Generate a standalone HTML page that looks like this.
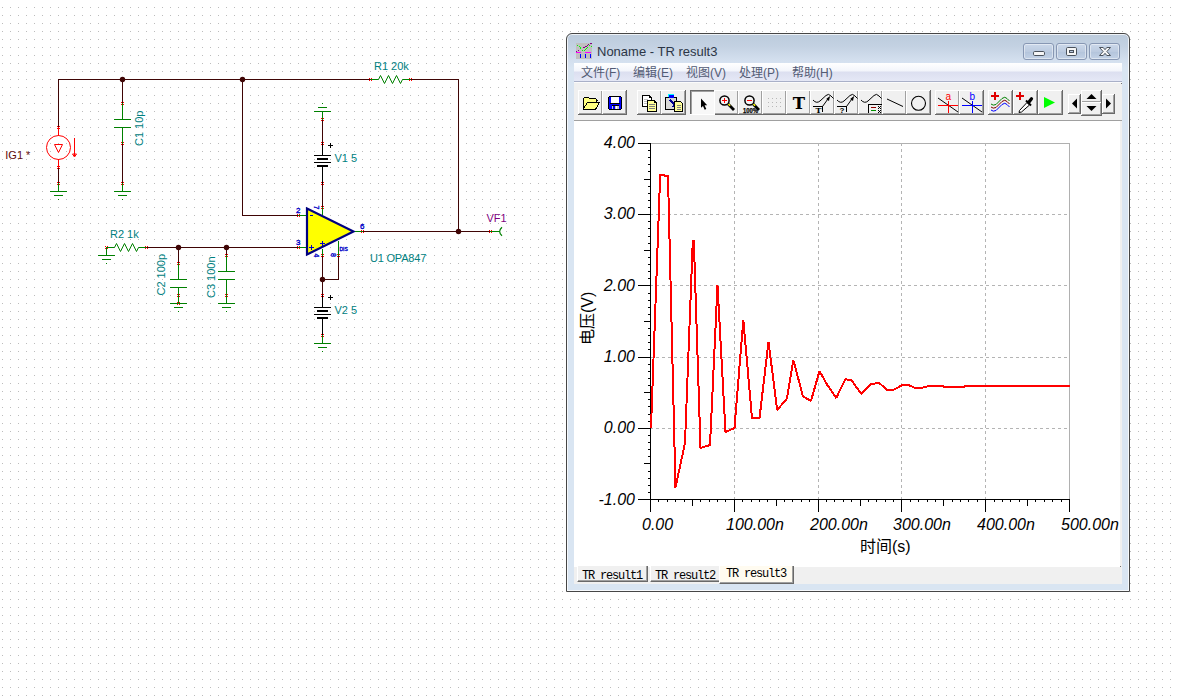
<!DOCTYPE html>
<html lang="zh">
<head>
<meta charset="utf-8">
<title>Noname - TR result3</title>
<style>
html,body{margin:0;padding:0;}
body{width:1178px;height:696px;position:relative;overflow:hidden;background:#fff;font-family:"Liberation Sans","Noto Sans CJK SC",sans-serif;}
svg{position:absolute;display:block;}
svg text{font-family:"Liberation Sans","Noto Sans CJK SC",sans-serif;}
#schem{left:0;top:0;}
#win{position:absolute;left:566px;top:33px;width:564px;height:559px;box-sizing:border-box;border:1px solid #464646;border-radius:6px 6px 0 0;
 background:linear-gradient(#bccbdc 0,#c3d1e2 12px,#d3dfee 26px,#d9e5f2 34px,#d9e5f2 100%);box-shadow:inset 0 0 0 1px rgba(255,255,255,.75);}
#ticon{left:576px;top:43px;}
#title{position:absolute;left:597px;top:43px;height:18px;line-height:18px;font-size:13px;color:#2c3646;white-space:nowrap;letter-spacing:0;}
.cb{position:absolute;top:43px;width:31px;height:17px;box-sizing:border-box;border:1px solid #8797b3;border-radius:3px;background:linear-gradient(#cbd8ea 0,#bccbe0 50%,#b3c4db 51%,#c3d2e6 100%);box-shadow:inset 0 0 0 1px rgba(255,255,255,.45);}
#menu{position:absolute;left:574px;top:63px;width:548px;height:19px;box-sizing:border-box;border-bottom:1px solid #a9b0c8;
 background:linear-gradient(#ffffff 0,#f3f5fb 8px,#dcdff0 9px,#e5e8f6 18px);}
#menu span{position:absolute;top:3px;font-size:12px;line-height:15px;color:#525b74;white-space:nowrap;}
#menu span i{font-style:normal;}
#tbar{position:absolute;left:574px;top:82px;width:548px;height:39px;box-sizing:border-box;background:#f0f0f0;border-top:1px solid #fbfbfb;border-bottom:1px solid #a0a0a0;}
#tb{left:574px;top:83px;}
#client{position:absolute;left:574px;top:83px;width:548px;height:501px;background:#f0f0f0;}
#plotbg{position:absolute;left:574px;top:121px;width:546px;height:446px;background:#fff;}
#plot{left:574px;top:121px;}
#tabs{position:absolute;left:574px;top:567px;width:548px;height:17px;background:#f0f0f0;}
.tab{position:absolute;top:566px;height:16px;box-sizing:border-box;background:#f0f0f0;border-left:1px solid #fff;border-right:1px solid #696969;border-bottom:1px solid #696969;box-shadow:inset -1px -1px 0 #a0a0a0;
 font-family:"Liberation Mono",monospace;font-size:12px;letter-spacing:-1.2px;line-height:21px;padding-left:4px;overflow:hidden;color:#000;white-space:nowrap;}
.tab.sel{height:18px;background:#fffbf0;line-height:17px;padding-left:6px;}
</style>
</head>
<body>
<svg id="schem" width="1178" height="696" viewBox="0 0 1178 696" shape-rendering="crispEdges">
<defs><pattern id="dots" x="0" y="0" width="8" height="8" patternUnits="userSpaceOnUse"><rect x="2" y="7" width="1" height="1" fill="#bcbcbc"/></pattern></defs>
<rect x="0" y="0" width="1178" height="696" fill="#ffffff"/>
<rect x="0" y="0" width="1178" height="696" fill="url(#dots)"/>
<rect x="58" y="79" width="313" height="1" fill="#3f0505"/>
<rect x="58" y="79" width="1" height="49" fill="#3f0505"/>
<rect x="122" y="79" width="1" height="25" fill="#3f0505"/>
<rect x="242" y="79" width="1" height="137" fill="#3f0505"/>
<rect x="242" y="215" width="57" height="1" fill="#3f0505"/>
<rect x="410" y="79" width="49" height="1" fill="#3f0505"/>
<rect x="458" y="79" width="1" height="153" fill="#3f0505"/>
<rect x="362" y="231" width="129" height="1" fill="#3f0505"/>
<rect x="146" y="247" width="153" height="1" fill="#3f0505"/>
<rect x="178" y="247" width="1" height="17" fill="#3f0505"/>
<rect x="226" y="247" width="1" height="9" fill="#3f0505"/>
<rect x="58" y="167" width="1" height="17" fill="#3f0505"/>
<rect x="122" y="143" width="1" height="41" fill="#3f0505"/>
<rect x="322" y="119" width="1" height="25" fill="#3f0505"/>
<rect x="322" y="183" width="1" height="25" fill="#3f0505"/>
<rect x="322" y="255" width="1" height="41" fill="#3f0505"/>
<rect x="338" y="255" width="1" height="25" fill="#3f0505"/>
<rect x="322" y="279" width="17" height="1" fill="#3f0505"/>
<rect x="58" y="127" width="1" height="9" fill="#ff0000"/>
<rect x="58" y="159" width="1" height="9" fill="#ff0000"/>
<circle cx="58.5" cy="147.5" r="12" fill="none" stroke="#ff0000" stroke-width="1" shape-rendering="auto"/>
<polygon points="54.5,144.5 62.5,144.5 58.5,152.5" fill="none" stroke="#ff0000" stroke-width="1" shape-rendering="auto"/>
<rect x="74" y="138" width="1" height="18" fill="#ff0000"/>
<polygon points="72.5,154 76.5,154 74.5,157" fill="none" stroke="#ff0000" stroke-width="1" shape-rendering="auto"/>
<rect x="57" y="126" width="1" height="1" fill="#ff0000"/>
<rect x="57" y="128" width="1" height="1" fill="#ff0000"/>
<rect x="59" y="126" width="1" height="1" fill="#ff0000"/>
<rect x="59" y="128" width="1" height="1" fill="#ff0000"/>
<rect x="57" y="166" width="1" height="1" fill="#ff0000"/>
<rect x="57" y="168" width="1" height="1" fill="#ff0000"/>
<rect x="59" y="166" width="1" height="1" fill="#ff0000"/>
<rect x="59" y="168" width="1" height="1" fill="#ff0000"/>
<rect x="58" y="183" width="1" height="9" fill="#008000"/>
<rect x="50" y="191" width="17" height="1" fill="#008000"/>
<rect x="54" y="195" width="9" height="1" fill="#008000"/>
<rect x="58" y="199" width="1" height="1" fill="#008000"/>
<rect x="57" y="182" width="1" height="1" fill="#ff0000"/>
<rect x="57" y="184" width="1" height="1" fill="#ff0000"/>
<rect x="59" y="182" width="1" height="1" fill="#ff0000"/>
<rect x="59" y="184" width="1" height="1" fill="#ff0000"/>
<rect x="122" y="183" width="1" height="9" fill="#008000"/>
<rect x="114" y="191" width="17" height="1" fill="#008000"/>
<rect x="118" y="195" width="9" height="1" fill="#008000"/>
<rect x="122" y="199" width="1" height="1" fill="#008000"/>
<rect x="121" y="182" width="1" height="1" fill="#ff0000"/>
<rect x="121" y="184" width="1" height="1" fill="#ff0000"/>
<rect x="123" y="182" width="1" height="1" fill="#ff0000"/>
<rect x="123" y="184" width="1" height="1" fill="#ff0000"/>
<rect x="122" y="103" width="1" height="17" fill="#008000"/>
<rect x="114" y="119" width="17" height="1" fill="#008000"/>
<rect x="114" y="127" width="17" height="1" fill="#008000"/>
<rect x="122" y="127" width="1" height="17" fill="#008000"/>
<rect x="121" y="102" width="1" height="1" fill="#ff0000"/>
<rect x="121" y="104" width="1" height="1" fill="#ff0000"/>
<rect x="123" y="102" width="1" height="1" fill="#ff0000"/>
<rect x="123" y="104" width="1" height="1" fill="#ff0000"/>
<rect x="121" y="142" width="1" height="1" fill="#ff0000"/>
<rect x="121" y="144" width="1" height="1" fill="#ff0000"/>
<rect x="123" y="142" width="1" height="1" fill="#ff0000"/>
<rect x="123" y="144" width="1" height="1" fill="#ff0000"/>
<polyline points="370.5,79.5 378.5,79.5 380.5,75.5 384.5,83.5 388.5,75.5 392.5,83.5 396.5,75.5 400.5,83.5 402.5,79.5 410.5,79.5" fill="none" stroke="#008000" stroke-width="1" shape-rendering="auto"/>
<rect x="369" y="78" width="1" height="1" fill="#ff0000"/>
<rect x="369" y="80" width="1" height="1" fill="#ff0000"/>
<rect x="371" y="78" width="1" height="1" fill="#ff0000"/>
<rect x="371" y="80" width="1" height="1" fill="#ff0000"/>
<rect x="409" y="78" width="1" height="1" fill="#ff0000"/>
<rect x="409" y="80" width="1" height="1" fill="#ff0000"/>
<rect x="411" y="78" width="1" height="1" fill="#ff0000"/>
<rect x="411" y="80" width="1" height="1" fill="#ff0000"/>
<rect x="322" y="111" width="1" height="9" fill="#008000"/>
<rect x="314" y="111" width="17" height="1" fill="#008000"/>
<rect x="318" y="107" width="9" height="1" fill="#008000"/>
<rect x="322" y="103" width="1" height="1" fill="#008000"/>
<rect x="321" y="118" width="1" height="1" fill="#ff0000"/>
<rect x="321" y="120" width="1" height="1" fill="#ff0000"/>
<rect x="323" y="118" width="1" height="1" fill="#ff0000"/>
<rect x="323" y="120" width="1" height="1" fill="#ff0000"/>
<rect x="322" y="143" width="1" height="13" fill="#000000"/>
<rect x="314" y="155" width="17" height="1" fill="#000000"/>
<rect x="317" y="158" width="11" height="2" fill="#000000"/>
<rect x="314" y="162" width="17" height="1" fill="#000000"/>
<rect x="317" y="165" width="11" height="2" fill="#000000"/>
<rect x="322" y="166" width="1" height="18" fill="#000000"/>
<rect x="321" y="142" width="1" height="1" fill="#ff0000"/>
<rect x="321" y="144" width="1" height="1" fill="#ff0000"/>
<rect x="323" y="142" width="1" height="1" fill="#ff0000"/>
<rect x="323" y="144" width="1" height="1" fill="#ff0000"/>
<rect x="321" y="182" width="1" height="1" fill="#ff0000"/>
<rect x="321" y="184" width="1" height="1" fill="#ff0000"/>
<rect x="323" y="182" width="1" height="1" fill="#ff0000"/>
<rect x="323" y="184" width="1" height="1" fill="#ff0000"/>
<rect x="328" y="145" width="5" height="1" fill="#000000"/>
<rect x="330" y="143" width="1" height="5" fill="#000000"/>
<polygon points="307,208.5 307,254.5 353.5,231.5" fill="#ffff00" stroke="#000080" stroke-width="2.2" stroke-linejoin="miter" shape-rendering="auto"/>
<rect x="298" y="215" width="8" height="1" fill="#008000"/>
<rect x="298" y="247" width="8" height="1" fill="#008000"/>
<rect x="355" y="231" width="8" height="1" fill="#008000"/>
<rect x="322" y="207" width="1" height="8" fill="#008000"/>
<rect x="322" y="249" width="1" height="7" fill="#008000"/>
<rect x="338" y="241" width="1" height="15" fill="#008000"/>
<rect x="297" y="214" width="1" height="1" fill="#ff0000"/>
<rect x="297" y="216" width="1" height="1" fill="#ff0000"/>
<rect x="299" y="214" width="1" height="1" fill="#ff0000"/>
<rect x="299" y="216" width="1" height="1" fill="#ff0000"/>
<rect x="297" y="246" width="1" height="1" fill="#ff0000"/>
<rect x="297" y="248" width="1" height="1" fill="#ff0000"/>
<rect x="299" y="246" width="1" height="1" fill="#ff0000"/>
<rect x="299" y="248" width="1" height="1" fill="#ff0000"/>
<rect x="361" y="230" width="1" height="1" fill="#ff0000"/>
<rect x="361" y="232" width="1" height="1" fill="#ff0000"/>
<rect x="363" y="230" width="1" height="1" fill="#ff0000"/>
<rect x="363" y="232" width="1" height="1" fill="#ff0000"/>
<rect x="321" y="206" width="1" height="1" fill="#ff0000"/>
<rect x="321" y="208" width="1" height="1" fill="#ff0000"/>
<rect x="323" y="206" width="1" height="1" fill="#ff0000"/>
<rect x="323" y="208" width="1" height="1" fill="#ff0000"/>
<rect x="321" y="254" width="1" height="1" fill="#ff0000"/>
<rect x="321" y="256" width="1" height="1" fill="#ff0000"/>
<rect x="323" y="254" width="1" height="1" fill="#ff0000"/>
<rect x="323" y="256" width="1" height="1" fill="#ff0000"/>
<rect x="337" y="254" width="1" height="1" fill="#ff0000"/>
<rect x="337" y="256" width="1" height="1" fill="#ff0000"/>
<rect x="339" y="254" width="1" height="1" fill="#ff0000"/>
<rect x="339" y="256" width="1" height="1" fill="#ff0000"/>
<text x="296" y="212.7" fill="#0000c8" font-size="8" stroke="#0000c8" stroke-width="0.35">2</text>
<text x="296" y="244.6" fill="#0000c8" font-size="8" stroke="#0000c8" stroke-width="0.35">3</text>
<text x="360" y="228.6" fill="#0000c8" font-size="8" stroke="#0000c8" stroke-width="0.35">6</text>
<text transform="translate(314,205.5) rotate(90)" fill="#0000c8" font-size="7" stroke="#0000c8" stroke-width="0.35">7</text>
<text transform="translate(314,253.5) rotate(90)" fill="#0000c8" font-size="7" stroke="#0000c8" stroke-width="0.35">4</text>
<text transform="translate(330.5,253) rotate(90)" fill="#0000c8" font-size="7" stroke="#0000c8" stroke-width="0.35">8</text>
<text x="339.5" y="251.2" fill="#0000c8" font-size="5" stroke="#0000c8" stroke-width="0.35">DIS</text>
<rect x="310" y="215" width="3" height="1" fill="#0000c8"/>
<rect x="309" y="247" width="5" height="1" fill="#0000c8"/>
<rect x="311" y="245" width="1" height="5" fill="#0000c8"/>
<rect x="320" y="243" width="5" height="1" fill="#0000c8"/>
<rect x="322" y="241" width="1" height="5" fill="#0000c8"/>
<rect x="322" y="295" width="1" height="13" fill="#000000"/>
<rect x="314" y="307" width="17" height="1" fill="#000000"/>
<rect x="317" y="310" width="11" height="2" fill="#000000"/>
<rect x="314" y="314" width="17" height="1" fill="#000000"/>
<rect x="317" y="317" width="11" height="2" fill="#000000"/>
<rect x="322" y="318" width="1" height="18" fill="#000000"/>
<rect x="321" y="294" width="1" height="1" fill="#ff0000"/>
<rect x="321" y="296" width="1" height="1" fill="#ff0000"/>
<rect x="323" y="294" width="1" height="1" fill="#ff0000"/>
<rect x="323" y="296" width="1" height="1" fill="#ff0000"/>
<rect x="321" y="334" width="1" height="1" fill="#ff0000"/>
<rect x="321" y="336" width="1" height="1" fill="#ff0000"/>
<rect x="323" y="334" width="1" height="1" fill="#ff0000"/>
<rect x="323" y="336" width="1" height="1" fill="#ff0000"/>
<rect x="328" y="297" width="5" height="1" fill="#000000"/>
<rect x="330" y="295" width="1" height="5" fill="#000000"/>
<rect x="322" y="335" width="1" height="9" fill="#008000"/>
<rect x="314" y="343" width="17" height="1" fill="#008000"/>
<rect x="318" y="347" width="9" height="1" fill="#008000"/>
<rect x="322" y="351" width="1" height="1" fill="#008000"/>
<rect x="321" y="334" width="1" height="1" fill="#ff0000"/>
<rect x="321" y="336" width="1" height="1" fill="#ff0000"/>
<rect x="323" y="334" width="1" height="1" fill="#ff0000"/>
<rect x="323" y="336" width="1" height="1" fill="#ff0000"/>
<polyline points="106.5,247.5 114.5,247.5 116.5,243.5 120.5,251.5 124.5,243.5 128.5,251.5 132.5,243.5 136.5,251.5 138.5,247.5 146.5,247.5" fill="none" stroke="#008000" stroke-width="1" shape-rendering="auto"/>
<rect x="105" y="246" width="1" height="1" fill="#ff0000"/>
<rect x="105" y="248" width="1" height="1" fill="#ff0000"/>
<rect x="107" y="246" width="1" height="1" fill="#ff0000"/>
<rect x="107" y="248" width="1" height="1" fill="#ff0000"/>
<rect x="145" y="246" width="1" height="1" fill="#ff0000"/>
<rect x="145" y="248" width="1" height="1" fill="#ff0000"/>
<rect x="147" y="246" width="1" height="1" fill="#ff0000"/>
<rect x="147" y="248" width="1" height="1" fill="#ff0000"/>
<rect x="106" y="247" width="1" height="9" fill="#008000"/>
<rect x="98" y="255" width="17" height="1" fill="#008000"/>
<rect x="102" y="259" width="9" height="1" fill="#008000"/>
<rect x="106" y="263" width="1" height="1" fill="#008000"/>
<rect x="178" y="263" width="1" height="17" fill="#008000"/>
<rect x="170" y="279" width="17" height="1" fill="#008000"/>
<rect x="170" y="287" width="17" height="1" fill="#008000"/>
<rect x="178" y="287" width="1" height="17" fill="#008000"/>
<rect x="177" y="262" width="1" height="1" fill="#ff0000"/>
<rect x="177" y="264" width="1" height="1" fill="#ff0000"/>
<rect x="179" y="262" width="1" height="1" fill="#ff0000"/>
<rect x="179" y="264" width="1" height="1" fill="#ff0000"/>
<rect x="177" y="302" width="1" height="1" fill="#ff0000"/>
<rect x="177" y="304" width="1" height="1" fill="#ff0000"/>
<rect x="179" y="302" width="1" height="1" fill="#ff0000"/>
<rect x="179" y="304" width="1" height="1" fill="#ff0000"/>
<rect x="177" y="294" width="1" height="1" fill="#ff0000"/>
<rect x="177" y="296" width="1" height="1" fill="#ff0000"/>
<rect x="179" y="294" width="1" height="1" fill="#ff0000"/>
<rect x="179" y="296" width="1" height="1" fill="#ff0000"/>
<rect x="170" y="303" width="17" height="1" fill="#008000"/>
<rect x="174" y="307" width="9" height="1" fill="#008000"/>
<rect x="178" y="311" width="1" height="1" fill="#008000"/>
<rect x="226" y="255" width="1" height="17" fill="#008000"/>
<rect x="218" y="271" width="17" height="1" fill="#008000"/>
<rect x="218" y="279" width="17" height="1" fill="#008000"/>
<rect x="226" y="279" width="1" height="17" fill="#008000"/>
<rect x="225" y="254" width="1" height="1" fill="#ff0000"/>
<rect x="225" y="256" width="1" height="1" fill="#ff0000"/>
<rect x="227" y="254" width="1" height="1" fill="#ff0000"/>
<rect x="227" y="256" width="1" height="1" fill="#ff0000"/>
<rect x="225" y="294" width="1" height="1" fill="#ff0000"/>
<rect x="225" y="296" width="1" height="1" fill="#ff0000"/>
<rect x="227" y="294" width="1" height="1" fill="#ff0000"/>
<rect x="227" y="296" width="1" height="1" fill="#ff0000"/>
<rect x="226" y="295" width="1" height="9" fill="#008000"/>
<rect x="218" y="303" width="17" height="1" fill="#008000"/>
<rect x="222" y="307" width="9" height="1" fill="#008000"/>
<rect x="226" y="311" width="1" height="1" fill="#008000"/>
<rect x="490" y="231" width="10" height="1" fill="#008000"/>
<rect x="489" y="230" width="1" height="1" fill="#ff0000"/>
<rect x="489" y="232" width="1" height="1" fill="#ff0000"/>
<rect x="491" y="230" width="1" height="1" fill="#ff0000"/>
<rect x="491" y="232" width="1" height="1" fill="#ff0000"/>
<path d="M502,227.3 Q497.3,231.5 502,235.8" fill="none" stroke="#008000" stroke-width="1.2" shape-rendering="auto"/>
<circle cx="122.5" cy="79.5" r="2.7" fill="#3f0505" shape-rendering="auto"/>
<circle cx="242.5" cy="79.5" r="2.7" fill="#3f0505" shape-rendering="auto"/>
<circle cx="458.5" cy="231.5" r="2.7" fill="#3f0505" shape-rendering="auto"/>
<circle cx="178.5" cy="247.5" r="2.7" fill="#3f0505" shape-rendering="auto"/>
<circle cx="226.5" cy="247.5" r="2.7" fill="#3f0505" shape-rendering="auto"/>
<circle cx="322.5" cy="279.5" r="2.7" fill="#3f0505" shape-rendering="auto"/>
<text x="374" y="70" fill="#008080" font-size="11">R1 20k</text>
<text x="5.3" y="159" fill="#600a0a" font-size="11">IG1 *</text>
<text transform="translate(143,146) rotate(-90)" fill="#008080" font-size="11">C1 10p</text>
<text x="334.5" y="162" fill="#008080" font-size="11">V1 5</text>
<text x="334.5" y="314" fill="#008080" font-size="11">V2 5</text>
<text x="370" y="262" fill="#008080" font-size="11" letter-spacing="-0.2">U1 OPA847</text>
<text x="486.5" y="222" fill="#800080" font-size="11">VF1</text>
<text x="110" y="238" fill="#008080" font-size="11">R2 1k</text>
<text transform="translate(165.3,295.5) rotate(-90)" fill="#008080" font-size="11">C2 100p</text>
<text transform="translate(214.5,298) rotate(-90)" fill="#008080" font-size="11">C3 100n</text>
</svg>
<div id="win"></div>
<svg id="ticon" width="16" height="16" viewBox="0 0 16 16" shape-rendering="crispEdges">
<rect x="0" y="0" width="16" height="16" fill="#c0c0c0"/>
<rect x="14" y="0" width="2" height="1" fill="#800080"/>
<rect x="12" y="1" width="1" height="1" fill="#800080"/>
<rect x="11" y="2" width="1" height="1" fill="#800080"/>
<rect x="9" y="3" width="2" height="1" fill="#800080"/>
<rect x="7" y="4" width="2" height="1" fill="#800080"/>
<rect x="2" y="7" width="1" height="1" fill="#800080"/>
<rect x="0" y="8" width="1" height="1" fill="#800080"/>
<rect x="1" y="2" width="1" height="1" fill="#00ff00"/>
<rect x="3" y="3" width="1" height="1" fill="#00ff00"/>
<rect x="4" y="4" width="1" height="1" fill="#00ff00"/>
<rect x="4" y="5" width="1" height="1" fill="#00ff00"/>
<rect x="6" y="7" width="1" height="1" fill="#00ff00"/>
<rect x="8" y="7" width="1" height="1" fill="#00ff00"/>
<rect x="9" y="6" width="1" height="1" fill="#00ff00"/>
<rect x="10" y="5" width="1" height="1" fill="#00ff00"/>
<rect x="11" y="4" width="1" height="1" fill="#00ff00"/>
<rect x="13" y="2" width="1" height="1" fill="#00ff00"/>
<rect x="15" y="3" width="1" height="1" fill="#00ff00"/>
<rect x="0" y="9" width="5" height="1" fill="#ff00ff"/>
<rect x="9" y="9" width="6" height="1" fill="#ff00ff"/>
<rect x="4" y="11" width="1" height="4" fill="#0000ff"/>
<rect x="9" y="11" width="1" height="4" fill="#0000ff"/>
<rect x="14" y="11" width="1" height="4" fill="#0000ff"/>
</svg>
<div id="title">Noname - TR result3</div>
<div class="cb" style="left:1023px"></div><div class="cb" style="left:1056px"></div><div class="cb" style="left:1089px"></div>
<svg id="cbg" style="left:1023px;top:43px" width="97" height="17" viewBox="0 0 97 17">
<rect x="10.500" y="8.500" width="11" height="4" rx="1.200" fill="#f6f6f6" stroke="#4a525c" stroke-width="1"/>
<rect x="43.500" y="4.500" width="10" height="8" rx="1.200" fill="#f6f6f6" stroke="#4a525c" stroke-width="1"/><rect x="46.500" y="7.500" width="4" height="2" fill="#b9c8dd" stroke="#4a525c" stroke-width="1"/>
<path d="M76.500,4.500 h3.700 l1.800,2.200 l1.800,-2.200 h3.700 l-3.600,4 l3.600,4 h-3.700 l-1.800,-2.200 l-1.800,2.200 h-3.700 l3.600,-4 z" fill="#f6f6f6" stroke="#4a525c" stroke-width="1"/>
</svg>
<div id="menu"><span style="left:7px">文件<i>(F)</i></span><span style="left:59px">编辑<i>(E)</i></span><span style="left:112px">视图<i>(V)</i></span><span style="left:165px">处理<i>(P)</i></span><span style="left:218px">帮助<i>(H)</i></span></div>
<div id="client"></div>
<div id="tbar"></div>
<svg id="tb" width="548" height="38" viewBox="574 83 548 38" shape-rendering="crispEdges">
<rect x="578" y="90" width="25" height="25" fill="#f0f0f0"/>
<rect x="578" y="90" width="25" height="1" fill="#ffffff"/>
<rect x="578" y="90" width="1" height="25" fill="#ffffff"/>
<rect x="601" y="91" width="1" height="23" fill="#a0a0a0"/>
<rect x="579" y="113" width="23" height="1" fill="#a0a0a0"/>
<rect x="602" y="90" width="1" height="25" fill="#696969"/>
<rect x="578" y="114" width="25" height="1" fill="#696969"/>
<rect x="602" y="90" width="25" height="25" fill="#f0f0f0"/>
<rect x="602" y="90" width="25" height="1" fill="#ffffff"/>
<rect x="602" y="90" width="1" height="25" fill="#ffffff"/>
<rect x="625" y="91" width="1" height="23" fill="#a0a0a0"/>
<rect x="603" y="113" width="23" height="1" fill="#a0a0a0"/>
<rect x="626" y="90" width="1" height="25" fill="#696969"/>
<rect x="602" y="114" width="25" height="1" fill="#696969"/>
<rect x="637" y="90" width="25" height="25" fill="#f0f0f0"/>
<rect x="637" y="90" width="25" height="1" fill="#ffffff"/>
<rect x="637" y="90" width="1" height="25" fill="#ffffff"/>
<rect x="660" y="91" width="1" height="23" fill="#a0a0a0"/>
<rect x="638" y="113" width="23" height="1" fill="#a0a0a0"/>
<rect x="661" y="90" width="1" height="25" fill="#696969"/>
<rect x="637" y="114" width="25" height="1" fill="#696969"/>
<rect x="661" y="90" width="25" height="25" fill="#f0f0f0"/>
<rect x="661" y="90" width="25" height="1" fill="#ffffff"/>
<rect x="661" y="90" width="1" height="25" fill="#ffffff"/>
<rect x="684" y="91" width="1" height="23" fill="#a0a0a0"/>
<rect x="662" y="113" width="23" height="1" fill="#a0a0a0"/>
<rect x="685" y="90" width="1" height="25" fill="#696969"/>
<rect x="661" y="114" width="25" height="1" fill="#696969"/>
<rect x="714" y="90" width="25" height="25" fill="#f0f0f0"/>
<rect x="714" y="90" width="25" height="1" fill="#ffffff"/>
<rect x="714" y="90" width="1" height="25" fill="#ffffff"/>
<rect x="737" y="91" width="1" height="23" fill="#a0a0a0"/>
<rect x="715" y="113" width="23" height="1" fill="#a0a0a0"/>
<rect x="738" y="90" width="1" height="25" fill="#696969"/>
<rect x="714" y="114" width="25" height="1" fill="#696969"/>
<rect x="738" y="90" width="25" height="25" fill="#f0f0f0"/>
<rect x="738" y="90" width="25" height="1" fill="#ffffff"/>
<rect x="738" y="90" width="1" height="25" fill="#ffffff"/>
<rect x="761" y="91" width="1" height="23" fill="#a0a0a0"/>
<rect x="739" y="113" width="23" height="1" fill="#a0a0a0"/>
<rect x="762" y="90" width="1" height="25" fill="#696969"/>
<rect x="738" y="114" width="25" height="1" fill="#696969"/>
<rect x="762" y="90" width="25" height="25" fill="#f0f0f0"/>
<rect x="762" y="90" width="25" height="1" fill="#ffffff"/>
<rect x="762" y="90" width="1" height="25" fill="#ffffff"/>
<rect x="785" y="91" width="1" height="23" fill="#a0a0a0"/>
<rect x="763" y="113" width="23" height="1" fill="#a0a0a0"/>
<rect x="786" y="90" width="1" height="25" fill="#696969"/>
<rect x="762" y="114" width="25" height="1" fill="#696969"/>
<rect x="786" y="90" width="25" height="25" fill="#f0f0f0"/>
<rect x="786" y="90" width="25" height="1" fill="#ffffff"/>
<rect x="786" y="90" width="1" height="25" fill="#ffffff"/>
<rect x="809" y="91" width="1" height="23" fill="#a0a0a0"/>
<rect x="787" y="113" width="23" height="1" fill="#a0a0a0"/>
<rect x="810" y="90" width="1" height="25" fill="#696969"/>
<rect x="786" y="114" width="25" height="1" fill="#696969"/>
<rect x="810" y="90" width="25" height="25" fill="#f0f0f0"/>
<rect x="810" y="90" width="25" height="1" fill="#ffffff"/>
<rect x="810" y="90" width="1" height="25" fill="#ffffff"/>
<rect x="833" y="91" width="1" height="23" fill="#a0a0a0"/>
<rect x="811" y="113" width="23" height="1" fill="#a0a0a0"/>
<rect x="834" y="90" width="1" height="25" fill="#696969"/>
<rect x="810" y="114" width="25" height="1" fill="#696969"/>
<rect x="834" y="90" width="25" height="25" fill="#f0f0f0"/>
<rect x="834" y="90" width="25" height="1" fill="#ffffff"/>
<rect x="834" y="90" width="1" height="25" fill="#ffffff"/>
<rect x="857" y="91" width="1" height="23" fill="#a0a0a0"/>
<rect x="835" y="113" width="23" height="1" fill="#a0a0a0"/>
<rect x="858" y="90" width="1" height="25" fill="#696969"/>
<rect x="834" y="114" width="25" height="1" fill="#696969"/>
<rect x="858" y="90" width="25" height="25" fill="#f0f0f0"/>
<rect x="858" y="90" width="25" height="1" fill="#ffffff"/>
<rect x="858" y="90" width="1" height="25" fill="#ffffff"/>
<rect x="881" y="91" width="1" height="23" fill="#a0a0a0"/>
<rect x="859" y="113" width="23" height="1" fill="#a0a0a0"/>
<rect x="882" y="90" width="1" height="25" fill="#696969"/>
<rect x="858" y="114" width="25" height="1" fill="#696969"/>
<rect x="882" y="90" width="25" height="25" fill="#f0f0f0"/>
<rect x="882" y="90" width="25" height="1" fill="#ffffff"/>
<rect x="882" y="90" width="1" height="25" fill="#ffffff"/>
<rect x="905" y="91" width="1" height="23" fill="#a0a0a0"/>
<rect x="883" y="113" width="23" height="1" fill="#a0a0a0"/>
<rect x="906" y="90" width="1" height="25" fill="#696969"/>
<rect x="882" y="114" width="25" height="1" fill="#696969"/>
<rect x="906" y="90" width="25" height="25" fill="#f0f0f0"/>
<rect x="906" y="90" width="25" height="1" fill="#ffffff"/>
<rect x="906" y="90" width="1" height="25" fill="#ffffff"/>
<rect x="929" y="91" width="1" height="23" fill="#a0a0a0"/>
<rect x="907" y="113" width="23" height="1" fill="#a0a0a0"/>
<rect x="930" y="90" width="1" height="25" fill="#696969"/>
<rect x="906" y="114" width="25" height="1" fill="#696969"/>
<rect x="935" y="90" width="25" height="25" fill="#f0f0f0"/>
<rect x="935" y="90" width="25" height="1" fill="#ffffff"/>
<rect x="935" y="90" width="1" height="25" fill="#ffffff"/>
<rect x="958" y="91" width="1" height="23" fill="#a0a0a0"/>
<rect x="936" y="113" width="23" height="1" fill="#a0a0a0"/>
<rect x="959" y="90" width="1" height="25" fill="#696969"/>
<rect x="935" y="114" width="25" height="1" fill="#696969"/>
<rect x="959" y="90" width="25" height="25" fill="#f0f0f0"/>
<rect x="959" y="90" width="25" height="1" fill="#ffffff"/>
<rect x="959" y="90" width="1" height="25" fill="#ffffff"/>
<rect x="982" y="91" width="1" height="23" fill="#a0a0a0"/>
<rect x="960" y="113" width="23" height="1" fill="#a0a0a0"/>
<rect x="983" y="90" width="1" height="25" fill="#696969"/>
<rect x="959" y="114" width="25" height="1" fill="#696969"/>
<rect x="988" y="90" width="25" height="25" fill="#f0f0f0"/>
<rect x="988" y="90" width="25" height="1" fill="#ffffff"/>
<rect x="988" y="90" width="1" height="25" fill="#ffffff"/>
<rect x="1011" y="91" width="1" height="23" fill="#a0a0a0"/>
<rect x="989" y="113" width="23" height="1" fill="#a0a0a0"/>
<rect x="1012" y="90" width="1" height="25" fill="#696969"/>
<rect x="988" y="114" width="25" height="1" fill="#696969"/>
<rect x="1013" y="90" width="25" height="25" fill="#f0f0f0"/>
<rect x="1013" y="90" width="25" height="1" fill="#ffffff"/>
<rect x="1013" y="90" width="1" height="25" fill="#ffffff"/>
<rect x="1036" y="91" width="1" height="23" fill="#a0a0a0"/>
<rect x="1014" y="113" width="23" height="1" fill="#a0a0a0"/>
<rect x="1037" y="90" width="1" height="25" fill="#696969"/>
<rect x="1013" y="114" width="25" height="1" fill="#696969"/>
<rect x="1038" y="90" width="25" height="25" fill="#f0f0f0"/>
<rect x="1038" y="90" width="25" height="1" fill="#ffffff"/>
<rect x="1038" y="90" width="1" height="25" fill="#ffffff"/>
<rect x="1061" y="91" width="1" height="23" fill="#a0a0a0"/>
<rect x="1039" y="113" width="23" height="1" fill="#a0a0a0"/>
<rect x="1062" y="90" width="1" height="25" fill="#696969"/>
<rect x="1038" y="114" width="25" height="1" fill="#696969"/>
<rect x="690" y="90" width="25" height="25" fill="#f8f8f8"/>
<rect x="690" y="90" width="25" height="1" fill="#696969"/>
<rect x="690" y="90" width="1" height="25" fill="#696969"/>
<rect x="691" y="91" width="23" height="1" fill="#a0a0a0"/>
<rect x="691" y="91" width="1" height="23" fill="#a0a0a0"/>
<rect x="714" y="90" width="1" height="25" fill="#ffffff"/>
<rect x="690" y="114" width="25" height="1" fill="#ffffff"/>
<rect x="714" y="90" width="1" height="25" fill="#ffffff"/>
<path d="M583.5,108.5 V98.5 L584.5,97.5 H588.5 L589.5,98.5 H595.5 L596.5,99.5 V102.5 H587.5 L583.5,108.5 Z" fill="#ffff80" stroke="#000" stroke-width="1" />
<path d="M587.5,102.5 H599.5 L595.5,109.5 H584 L583.5,108.5 Z" fill="#ffff80" stroke="#000" stroke-width="1" />
<rect x="596" y="100" width="2" height="1" fill="#000"/>
<path d="M609.5,96.5 H620.5 L621.5,97.5 V108.5 L620.5,109.5 H609.5 L608.5,108.5 V97.5 Z" fill="#0000ff" stroke="#000" stroke-width="1" />
<rect x="611" y="97" width="8" height="6" fill="#ffffff"/>
<rect x="610" y="103" width="10" height="1" fill="#000"/>
<rect x="612" y="105" width="7" height="1" fill="#000"/>
<rect x="612" y="106" width="7" height="3" fill="#c8c8c8"/>
<rect x="613" y="106" width="2" height="3" fill="#0000ff"/>
<rect x="616" y="106" width="1" height="3" fill="#ffffff"/>
<path d="M642.5,95.5 H649.5 L651.5,97.5 V106.5 H642.5 Z" fill="#ffffff" stroke="#000" stroke-width="1" />
<path d="M649.5,95.5 V97.5 H651.5" fill="none" stroke="#000" stroke-width="1" />
<rect x="644" y="99" width="4" height="1" fill="#c0c0c0"/>
<rect x="644" y="101" width="4" height="1" fill="#c0c0c0"/>
<rect x="644" y="103" width="4" height="1" fill="#c0c0c0"/>
<path d="M647.5,100.5 H654.5 L656.5,102.5 V111.5 H647.5 Z" fill="#ffff99" stroke="#000" stroke-width="1" />
<path d="M654.5,100.5 V102.5 H656.5" fill="none" stroke="#000" stroke-width="1" />
<rect x="649" y="104" width="6" height="1" fill="#808080"/>
<rect x="649" y="106" width="6" height="1" fill="#808080"/>
<rect x="649" y="108" width="6" height="1" fill="#808080"/>
<path d="M665.5,97.5 H676.5 V109.5 H665.5 Z" fill="#d8d8d8" stroke="#000" stroke-width="1" />
<rect x="668" y="94" width="6" height="1" fill="#00ffff"/>
<rect x="668" y="95" width="1" height="2" fill="#00ffff"/>
<rect x="669" y="95" width="5" height="3" fill="#0000ff"/>
<path d="M670,100 L676,106" fill="none" stroke="#000090" stroke-width="2" />
<path d="M672,106.5 H677 V101.5 Z" fill="#000090" stroke="none" stroke-width="0" />
<path d="M674.5,101.5 H680.5 L682.5,103.5 V111.5 H674.5 Z" fill="#ffff99" stroke="#000" stroke-width="1" />
<rect x="677" y="105" width="4" height="1" fill="#808080"/>
<rect x="677" y="107" width="4" height="1" fill="#808080"/>
<rect x="677" y="109" width="4" height="1" fill="#808080"/>
<path d="M701,98.5 V107.8 L703,105.9 L704.7,109.8 L706.3,109.1 L704.6,105.3 H707.2 Z" fill="#000" stroke="none" stroke-width="0" shape-rendering="geometricPrecision"/>
<path d="M728.1,104.1 L734,110" fill="none" stroke="#000" stroke-width="2.8" shape-rendering="geometricPrecision"/>
<path d="M728.3,103.9 L730.1,105.7" fill="none" stroke="#ffff00" stroke-width="1.5" shape-rendering="geometricPrecision"/>
<circle cx="724.5" cy="100.5" r="4.6" fill="#f4f4f4" stroke="#000" stroke-width="1.5" shape-rendering="geometricPrecision"/>
<rect x="722" y="100" width="5" height="1" fill="#ff0000"/>
<rect x="724" y="98" width="1" height="5" fill="#ff0000"/>
<g style="opacity:0.98"><text x="743" y="113.3" font-size="7" font-weight="bold" fill="#000" stroke="#000" stroke-width="0.25" textLength="15" lengthAdjust="spacingAndGlyphs">100%</text></g>
<path d="M753.1,104.1 L759,110" fill="none" stroke="#000" stroke-width="2.8" shape-rendering="geometricPrecision"/>
<path d="M753.3,103.9 L755.1,105.7" fill="none" stroke="#ffff00" stroke-width="1.5" shape-rendering="geometricPrecision"/>
<circle cx="749.5" cy="100.5" r="4.6" fill="#f4f4f4" stroke="#000" stroke-width="1.5" shape-rendering="geometricPrecision"/>
<rect x="747" y="100" width="5" height="1" fill="#ff0000"/>
<rect x="768" y="98" width="1" height="1" fill="#b8b8b8"/>
<rect x="768" y="102" width="1" height="1" fill="#b8b8b8"/>
<rect x="768" y="106" width="1" height="1" fill="#b8b8b8"/>
<rect x="772" y="98" width="1" height="1" fill="#b8b8b8"/>
<rect x="772" y="102" width="1" height="1" fill="#b8b8b8"/>
<rect x="772" y="106" width="1" height="1" fill="#b8b8b8"/>
<rect x="776" y="98" width="1" height="1" fill="#b8b8b8"/>
<rect x="776" y="102" width="1" height="1" fill="#b8b8b8"/>
<rect x="776" y="106" width="1" height="1" fill="#b8b8b8"/>
<rect x="780" y="98" width="1" height="1" fill="#b8b8b8"/>
<rect x="780" y="102" width="1" height="1" fill="#b8b8b8"/>
<rect x="780" y="106" width="1" height="1" fill="#b8b8b8"/>
<text x="799" y="109" font-size="16.5" font-weight="bold" style="font-family:'DejaVu Serif','Liberation Serif',serif" text-anchor="middle" fill="#000">T</text>
<path d="M813,100 Q816.5,104 820,101 L826,95.5 Q828.5,93 831,96 L833.5,98.5" fill="none" stroke="#000" stroke-width="1" shape-rendering="geometricPrecision"/>
<path d="M822.5,112 V106.5 L829,97.5" fill="none" stroke="#000" stroke-width="1" shape-rendering="geometricPrecision"/>
<path d="M830,96 L826.2,99 L829,101 Z" fill="#000" stroke="none" stroke-width="0" shape-rendering="geometricPrecision"/>
<rect x="813" y="106" width="10" height="1" fill="#000"/>
<text x="815.5" y="113.2" font-size="8" font-weight="bold" style="font-family:'DejaVu Serif','Liberation Serif',serif" fill="#000">T</text>
<path d="M837,100 Q840.5,104 844,101 L850,95.5 Q852.5,93 855,96 L857.5,98.5" fill="none" stroke="#000" stroke-width="1" shape-rendering="geometricPrecision"/>
<path d="M846.5,112 V106.5 L853,97.5" fill="none" stroke="#000" stroke-width="1" shape-rendering="geometricPrecision"/>
<path d="M854,96 L850.2,99 L853,101 Z" fill="#000" stroke="none" stroke-width="0" shape-rendering="geometricPrecision"/>
<rect x="837" y="106" width="10" height="1" fill="#000"/>
<text x="839.5" y="113.4" font-size="8" font-weight="bold" fill="#000">?</text>
<path d="M861,100 Q864.5,104 868,101 L874,95.5 Q876.5,93 879,96 L881.5,98.5" fill="none" stroke="#000" stroke-width="1" shape-rendering="geometricPrecision"/>
<path d="M868.5,113 V104.5 H881.5" fill="none" stroke="#000" stroke-width="1" />
<rect x="871" y="107" width="5" height="1" fill="#900000"/>
<rect x="871" y="110" width="5" height="1" fill="#009000"/>
<path d="M878,106 l3,3 m0,-3 l-3,3 M878,110 l3,3 m0,-3 l-3,3" fill="none" stroke="#000" stroke-width="1" shape-rendering="geometricPrecision"/>
<path d="M887,99 L903,106.5" fill="none" stroke="#000" stroke-width="1" shape-rendering="geometricPrecision"/>
<circle cx="918.5" cy="103.3" r="7" fill="none" stroke="#000" stroke-width="1.1" shape-rendering="geometricPrecision"/>
<path d="M938,98 L958,112" fill="none" stroke="#000" stroke-width="1" shape-rendering="geometricPrecision"/>
<rect x="938" y="105" width="20" height="1" fill="#ff0000"/>
<rect x="948" y="101" width="1" height="12" fill="#ff0000"/>
<text x="945.5" y="100" font-size="10" fill="#ff0000">a</text>
<path d="M962,98 L982,112" fill="none" stroke="#000" stroke-width="1" shape-rendering="geometricPrecision"/>
<rect x="962" y="105" width="20" height="1" fill="#0000ff"/>
<rect x="972" y="101" width="1" height="12" fill="#0000ff"/>
<text x="969.5" y="100" font-size="10" fill="#0000ff">b</text>
<rect x="991" y="94.5" width="8" height="2" fill="#e00000"/>
<rect x="994" y="91.5" width="2" height="8" fill="#e00000"/>
<rect x="1016" y="94.5" width="8" height="2" fill="#e00000"/>
<rect x="1019" y="91.5" width="2" height="8" fill="#e00000"/>
<path d="M991,104 Q993,106 996,104.5 L1002,98.5 Q1005,96 1007,98.5 L1009.5,101" fill="none" stroke="#008000" stroke-width="1" shape-rendering="geometricPrecision"/>
<path d="M991,107 Q993,109 996,107.5 L1002,101.5 Q1005,99 1007,101.5 L1009.5,104" fill="none" stroke="#800000" stroke-width="1" shape-rendering="geometricPrecision"/>
<path d="M991,110 Q993,112 996,110.5 L1002,104.5 Q1005,102 1007,104.5 L1009.5,107" fill="none" stroke="#0000ff" stroke-width="1" shape-rendering="geometricPrecision"/>
<path d="M1019.5,110.5 L1027,102.5 L1029.5,105 L1021.5,112 L1019,112.5 Z" fill="#fff" stroke="#000" stroke-width="1" shape-rendering="geometricPrecision"/>
<path d="M1026,100.5 L1031,105.5" fill="none" stroke="#000" stroke-width="2" shape-rendering="geometricPrecision"/>
<path d="M1028.8,102.2 L1031.5,98.7" fill="none" stroke="#000" stroke-width="3.2" stroke-linecap="round" shape-rendering="geometricPrecision"/>
<path d="M1044,97 L1055,102.5 L1044,108 Z" fill="#00ff00" stroke="none" stroke-width="0" shape-rendering="geometricPrecision"/>
<rect x="1068" y="94" width="13" height="20" fill="#f0f0f0"/>
<rect x="1068" y="94" width="13" height="1" fill="#ffffff"/>
<rect x="1068" y="94" width="1" height="20" fill="#ffffff"/>
<rect x="1079" y="95" width="1" height="18" fill="#a0a0a0"/>
<rect x="1069" y="112" width="11" height="1" fill="#a0a0a0"/>
<rect x="1080" y="94" width="1" height="20" fill="#696969"/>
<rect x="1068" y="113" width="13" height="1" fill="#696969"/>
<rect x="1102" y="94" width="13" height="20" fill="#f0f0f0"/>
<rect x="1102" y="94" width="13" height="1" fill="#ffffff"/>
<rect x="1102" y="94" width="1" height="20" fill="#ffffff"/>
<rect x="1113" y="95" width="1" height="18" fill="#a0a0a0"/>
<rect x="1103" y="112" width="11" height="1" fill="#a0a0a0"/>
<rect x="1114" y="94" width="1" height="20" fill="#696969"/>
<rect x="1102" y="113" width="13" height="1" fill="#696969"/>
<rect x="1081" y="90" width="21" height="13" fill="#f0f0f0"/>
<rect x="1081" y="90" width="21" height="1" fill="#ffffff"/>
<rect x="1081" y="90" width="1" height="13" fill="#ffffff"/>
<rect x="1100" y="91" width="1" height="11" fill="#a0a0a0"/>
<rect x="1082" y="101" width="19" height="1" fill="#a0a0a0"/>
<rect x="1101" y="90" width="1" height="13" fill="#696969"/>
<rect x="1081" y="102" width="21" height="1" fill="#696969"/>
<rect x="1081" y="102" width="21" height="14" fill="#f0f0f0"/>
<rect x="1081" y="102" width="21" height="1" fill="#ffffff"/>
<rect x="1081" y="102" width="1" height="14" fill="#ffffff"/>
<rect x="1100" y="103" width="1" height="12" fill="#a0a0a0"/>
<rect x="1082" y="114" width="19" height="1" fill="#a0a0a0"/>
<rect x="1101" y="102" width="1" height="14" fill="#696969"/>
<rect x="1081" y="115" width="21" height="1" fill="#696969"/>
<path d="M1072,103.5 L1077,98.5 V108.5 Z" fill="#000" stroke="none" stroke-width="0" shape-rendering="geometricPrecision"/>
<path d="M1111,103.5 L1106,98.5 V108.5 Z" fill="#000" stroke="none" stroke-width="0" shape-rendering="geometricPrecision"/>
<path d="M1091.5,94 L1096.5,99 H1086.5 Z" fill="#000" stroke="none" stroke-width="0" shape-rendering="geometricPrecision"/>
<path d="M1091.5,111 L1096.5,106 H1086.5 Z" fill="#000" stroke="none" stroke-width="0" shape-rendering="geometricPrecision"/>
</svg>
<div id="plotbg"></div>
<svg id="plot" width="548" height="445" viewBox="574 121 548 445" shape-rendering="crispEdges">
<rect x="650" y="143" width="420" height="1" fill="#b0b0b0"/>
<rect x="1069" y="143" width="1" height="356" fill="#b0b0b0"/>
<line x1="734.5" y1="143" x2="734.5" y2="499" stroke="#b4b4b4" stroke-width="1" stroke-dasharray="3 3"/>
<line x1="650" y1="214.5" x2="1069" y2="214.5" stroke="#b4b4b4" stroke-width="1" stroke-dasharray="3 3"/>
<line x1="818.5" y1="143" x2="818.5" y2="499" stroke="#b4b4b4" stroke-width="1" stroke-dasharray="3 3"/>
<line x1="650" y1="285.5" x2="1069" y2="285.5" stroke="#b4b4b4" stroke-width="1" stroke-dasharray="3 3"/>
<line x1="901.5" y1="143" x2="901.5" y2="499" stroke="#b4b4b4" stroke-width="1" stroke-dasharray="3 3"/>
<line x1="650" y1="357.5" x2="1069" y2="357.5" stroke="#b4b4b4" stroke-width="1" stroke-dasharray="3 3"/>
<line x1="985.5" y1="143" x2="985.5" y2="499" stroke="#b4b4b4" stroke-width="1" stroke-dasharray="3 3"/>
<line x1="650" y1="428.5" x2="1069" y2="428.5" stroke="#b4b4b4" stroke-width="1" stroke-dasharray="3 3"/>
<rect x="650" y="143" width="1" height="357" fill="#000000"/>
<rect x="650" y="499" width="420" height="1" fill="#000000"/>
<rect x="638" y="143" width="12" height="1" fill="#000000"/>
<rect x="650" y="499" width="1" height="13" fill="#000000"/>
<rect x="648" y="150" width="2" height="1" fill="#000000"/>
<rect x="658" y="499" width="1" height="3" fill="#000000"/>
<rect x="648" y="157" width="2" height="1" fill="#000000"/>
<rect x="667" y="499" width="1" height="3" fill="#000000"/>
<rect x="648" y="164" width="2" height="1" fill="#000000"/>
<rect x="675" y="499" width="1" height="3" fill="#000000"/>
<rect x="648" y="171" width="2" height="1" fill="#000000"/>
<rect x="684" y="499" width="1" height="3" fill="#000000"/>
<rect x="644" y="179" width="6" height="1" fill="#000000"/>
<rect x="692" y="499" width="1" height="7" fill="#000000"/>
<rect x="648" y="186" width="2" height="1" fill="#000000"/>
<rect x="700" y="499" width="1" height="3" fill="#000000"/>
<rect x="648" y="193" width="2" height="1" fill="#000000"/>
<rect x="709" y="499" width="1" height="3" fill="#000000"/>
<rect x="648" y="200" width="2" height="1" fill="#000000"/>
<rect x="717" y="499" width="1" height="3" fill="#000000"/>
<rect x="648" y="207" width="2" height="1" fill="#000000"/>
<rect x="725" y="499" width="1" height="3" fill="#000000"/>
<rect x="638" y="214" width="12" height="1" fill="#000000"/>
<rect x="734" y="499" width="1" height="13" fill="#000000"/>
<rect x="648" y="221" width="2" height="1" fill="#000000"/>
<rect x="742" y="499" width="1" height="3" fill="#000000"/>
<rect x="648" y="228" width="2" height="1" fill="#000000"/>
<rect x="751" y="499" width="1" height="3" fill="#000000"/>
<rect x="648" y="236" width="2" height="1" fill="#000000"/>
<rect x="759" y="499" width="1" height="3" fill="#000000"/>
<rect x="648" y="243" width="2" height="1" fill="#000000"/>
<rect x="767" y="499" width="1" height="3" fill="#000000"/>
<rect x="644" y="250" width="6" height="1" fill="#000000"/>
<rect x="776" y="499" width="1" height="7" fill="#000000"/>
<rect x="648" y="257" width="2" height="1" fill="#000000"/>
<rect x="784" y="499" width="1" height="3" fill="#000000"/>
<rect x="648" y="264" width="2" height="1" fill="#000000"/>
<rect x="792" y="499" width="1" height="3" fill="#000000"/>
<rect x="648" y="271" width="2" height="1" fill="#000000"/>
<rect x="801" y="499" width="1" height="3" fill="#000000"/>
<rect x="648" y="278" width="2" height="1" fill="#000000"/>
<rect x="809" y="499" width="1" height="3" fill="#000000"/>
<rect x="638" y="285" width="12" height="1" fill="#000000"/>
<rect x="818" y="499" width="1" height="13" fill="#000000"/>
<rect x="648" y="293" width="2" height="1" fill="#000000"/>
<rect x="826" y="499" width="1" height="3" fill="#000000"/>
<rect x="648" y="300" width="2" height="1" fill="#000000"/>
<rect x="834" y="499" width="1" height="3" fill="#000000"/>
<rect x="648" y="307" width="2" height="1" fill="#000000"/>
<rect x="843" y="499" width="1" height="3" fill="#000000"/>
<rect x="648" y="314" width="2" height="1" fill="#000000"/>
<rect x="851" y="499" width="1" height="3" fill="#000000"/>
<rect x="644" y="321" width="6" height="1" fill="#000000"/>
<rect x="860" y="499" width="1" height="7" fill="#000000"/>
<rect x="648" y="328" width="2" height="1" fill="#000000"/>
<rect x="868" y="499" width="1" height="3" fill="#000000"/>
<rect x="648" y="335" width="2" height="1" fill="#000000"/>
<rect x="876" y="499" width="1" height="3" fill="#000000"/>
<rect x="648" y="342" width="2" height="1" fill="#000000"/>
<rect x="885" y="499" width="1" height="3" fill="#000000"/>
<rect x="648" y="349" width="2" height="1" fill="#000000"/>
<rect x="893" y="499" width="1" height="3" fill="#000000"/>
<rect x="638" y="357" width="12" height="1" fill="#000000"/>
<rect x="901" y="499" width="1" height="13" fill="#000000"/>
<rect x="648" y="364" width="2" height="1" fill="#000000"/>
<rect x="910" y="499" width="1" height="3" fill="#000000"/>
<rect x="648" y="371" width="2" height="1" fill="#000000"/>
<rect x="918" y="499" width="1" height="3" fill="#000000"/>
<rect x="648" y="378" width="2" height="1" fill="#000000"/>
<rect x="927" y="499" width="1" height="3" fill="#000000"/>
<rect x="648" y="385" width="2" height="1" fill="#000000"/>
<rect x="935" y="499" width="1" height="3" fill="#000000"/>
<rect x="644" y="392" width="6" height="1" fill="#000000"/>
<rect x="943" y="499" width="1" height="7" fill="#000000"/>
<rect x="648" y="399" width="2" height="1" fill="#000000"/>
<rect x="952" y="499" width="1" height="3" fill="#000000"/>
<rect x="648" y="406" width="2" height="1" fill="#000000"/>
<rect x="960" y="499" width="1" height="3" fill="#000000"/>
<rect x="648" y="414" width="2" height="1" fill="#000000"/>
<rect x="968" y="499" width="1" height="3" fill="#000000"/>
<rect x="648" y="421" width="2" height="1" fill="#000000"/>
<rect x="977" y="499" width="1" height="3" fill="#000000"/>
<rect x="638" y="428" width="12" height="1" fill="#000000"/>
<rect x="985" y="499" width="1" height="13" fill="#000000"/>
<rect x="648" y="435" width="2" height="1" fill="#000000"/>
<rect x="994" y="499" width="1" height="3" fill="#000000"/>
<rect x="648" y="442" width="2" height="1" fill="#000000"/>
<rect x="1002" y="499" width="1" height="3" fill="#000000"/>
<rect x="648" y="449" width="2" height="1" fill="#000000"/>
<rect x="1010" y="499" width="1" height="3" fill="#000000"/>
<rect x="648" y="456" width="2" height="1" fill="#000000"/>
<rect x="1019" y="499" width="1" height="3" fill="#000000"/>
<rect x="644" y="463" width="6" height="1" fill="#000000"/>
<rect x="1027" y="499" width="1" height="7" fill="#000000"/>
<rect x="648" y="471" width="2" height="1" fill="#000000"/>
<rect x="1035" y="499" width="1" height="3" fill="#000000"/>
<rect x="648" y="478" width="2" height="1" fill="#000000"/>
<rect x="1044" y="499" width="1" height="3" fill="#000000"/>
<rect x="648" y="485" width="2" height="1" fill="#000000"/>
<rect x="1052" y="499" width="1" height="3" fill="#000000"/>
<rect x="648" y="492" width="2" height="1" fill="#000000"/>
<rect x="1061" y="499" width="1" height="3" fill="#000000"/>
<rect x="638" y="499" width="12" height="1" fill="#000000"/>
<rect x="1069" y="499" width="1" height="13" fill="#000000"/>
<text x="635" y="148" text-anchor="end" font-style="italic" font-size="16">4.00</text>
<text x="635" y="219.3" text-anchor="end" font-style="italic" font-size="16">3.00</text>
<text x="635" y="290.6" text-anchor="end" font-style="italic" font-size="16">2.00</text>
<text x="635" y="361.9" text-anchor="end" font-style="italic" font-size="16">1.00</text>
<text x="635" y="433.2" text-anchor="end" font-style="italic" font-size="16">0.00</text>
<text x="635" y="504.5" text-anchor="end" font-style="italic" font-size="16">-1.00</text>
<text x="642" y="530" font-style="italic" font-size="16">0.00</text>
<text x="726" y="530" font-style="italic" font-size="16">100.00n</text>
<text x="810" y="530" font-style="italic" font-size="16">200.00n</text>
<text x="893" y="530" font-style="italic" font-size="16">300.00n</text>
<text x="977" y="530" font-style="italic" font-size="16">400.00n</text>
<text x="1061" y="530" font-style="italic" font-size="16">500.00n</text>
<text transform="translate(593,345) rotate(-90)" font-size="16">电压(V)</text>
<text x="860" y="552" font-size="16">时间(s)</text>
<polyline points="651,428 660.2,174.5 664,174.5 664.5,176 668,176 675.5,487.5 685,443 692.8,240.5 693.8,240.5 700.5,448 710,445 717.5,285.5 725.5,432 734.5,428 743.3,320 752,418 759.5,418 768.5,342 777.2,410 786.9,398.5 793.3,360 803,396.5 811,401 819.5,371 827,384.5 836.2,398 845.3,379.3 851.2,380 861.4,394 870.9,384 879.2,383 886.9,389.8 893.4,389.8 903.5,384.5 907,384.5 914.8,387.8 922,387.8 928,386.2 943.4,386.2 944,387 964.5,387 965,386.2 1070,386.2" fill="none" stroke="#ff0000" stroke-width="2" stroke-linejoin="bevel" shape-rendering="crispEdges"/>
</svg>
<div id="tabs"></div>
<div style="position:absolute;left:1120px;top:566px;width:1px;height:1px;background:#707070"></div><div style="position:absolute;left:1121px;top:83px;width:1px;height:1px;background:#707070"></div>
<div class="tab" style="left:577px;width:71px">TR result1</div>
<div class="tab" style="left:650px;width:69px;border-right:0;box-shadow:inset 0 -1px 0 #a0a0a0">TR result2</div>
<div class="tab sel" style="left:719px;width:75px">TR result3</div>
</body>
</html>
